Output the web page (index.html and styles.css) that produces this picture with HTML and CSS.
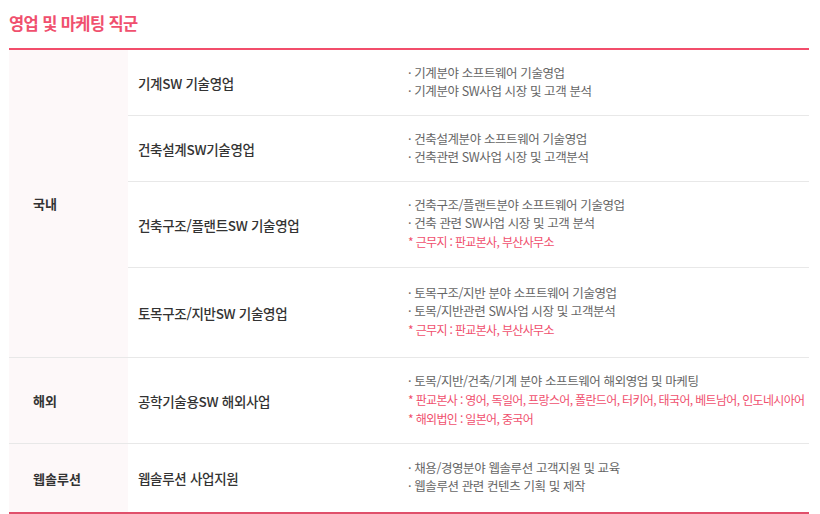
FILE: index.html
```html
<!DOCTYPE html>
<html lang="ko">
<head>
    <meta charset="UTF-8">
    <meta name="viewport" content="width=device-width, initial-scale=1.0">
    <title>영업 및 마케팅 직군</title>
    <link rel="stylesheet" href="styles.css">
</head>
<body>
    <div class="job-section">
        <h2 class="job-title">영업 및 마케팅 직군</h2>
        <table class="job-table">
            <colgroup>
                <col class="col-cat">
                <col class="col-name">
                <col class="col-desc">
            </colgroup>
            <tbody>
                <tr class="group-start">
                    <th rowspan="4" class="cat">국내</th>
                    <td class="name">기계SW 기술영업</td>
                    <td class="desc">
                        <p>· 기계분야 소프트웨어 기술영업</p>
                        <p>· 기계분야 SW사업 시장 및 고객 분석</p>
                    </td>
                </tr>
                <tr>
                    <td class="name">건축설계SW기술영업</td>
                    <td class="desc">
                        <p>· 건축설계분야 소프트웨어 기술영업</p>
                        <p>· 건축관련 SW사업 시장 및 고객분석</p>
                    </td>
                </tr>
                <tr class="row-mid">
                    <td class="name">건축구조/플랜트SW 기술영업</td>
                    <td class="desc">
                        <p>· 건축구조/플랜트분야 소프트웨어 기술영업</p>
                        <p>· 건축 관련 SW사업 시장 및 고객 분석</p>
                        <p class="note">* 근무지 : 판교본사, 부산사무소</p>
                    </td>
                </tr>
                <tr class="row-taller">
                    <td class="name">토목구조/지반SW 기술영업</td>
                    <td class="desc">
                        <p>· 토목구조/지반 분야 소프트웨어 기술영업</p>
                        <p>· 토목/지반관련 SW사업 시장 및 고객분석</p>
                        <p class="note">* 근무지 : 판교본사, 부산사무소</p>
                    </td>
                </tr>
                <tr class="group-start">
                    <th class="cat">해외</th>
                    <td class="name">공학기술용SW 해외사업</td>
                    <td class="desc">
                        <p>· 토목/지반/건축/기계 분야 소프트웨어 해외영업 및 마케팅</p>
                        <p class="note">* 판교본사 : 영어, 독일어, 프랑스어, 폴란드어, 터키어, 태국어, 베트남어, 인도네시아어</p>
                        <p class="note">* 해외법인 : 일본어, 중국어</p>
                    </td>
                </tr>
                <tr class="group-start row-tall last">
                    <th class="cat">웹솔루션</th>
                    <td class="name">웹솔루션 사업지원</td>
                    <td class="desc">
                        <p>· 채용/경영분야 웹솔루션 고객지원 및 교육</p>
                        <p>· 웹솔루션 관련 컨텐츠 기획 및 제작</p>
                    </td>
                </tr>
            </tbody>
        </table>
    </div>
</body>
</html>
```

FILE: styles.css
```css
body {
    margin: 0;
    font-family: "Noto Sans CJK KR", "Noto Sans", sans-serif;
    color: #333;
    background: #fff;
}
.job-section {
    width: 800px;
    padding: 0 9px;
}
.job-title {
    margin: 0;
    padding: 10px 0 12px;
    font-size: 16.5px;
    line-height: 26px;
    font-weight: 700;
    color: #f0506e;
    letter-spacing: -0.6px;
    border-bottom: 2px solid #f24d6b;
}
.job-table {
    width: 100%;
    border-collapse: collapse;
    table-layout: fixed;
}
.col-cat {
    width: 119px;
}
.col-name {
    width: 267px;
}
.job-table td,
.job-table th {
    border-top: 1px solid #e8e8e8;
    vertical-align: middle;
    text-align: left;
}
.job-table tr:first-child td,
.job-table tr:first-child th {
    border-top: none;
}
.cat {
    background: #fdf8f9;
    padding: 0 0 0 24px;
    font-size: 13px;
    font-weight: 700;
    color: #333;
}
.name {
    padding: 0 0 0 10px;
    font-size: 13.5px;
    font-weight: 500;
    color: #333;
    letter-spacing: -0.3px;
}
.desc {
    padding: 14px 0 15px 13px;
    font-size: 12.5px;
    color: #666;
    letter-spacing: -0.4px;
}
.row-mid .desc {
    padding: 14px 0 16px 13px;
}
.row-tall .desc {
    padding: 15px 0 17px 13px;
}
.row-taller .desc {
    padding: 16px 0 18px 13px;
}
.desc p {
    margin: 0;
    line-height: 18px;
    white-space: nowrap;
}
.desc .note {
    font-size: 12px;
    color: #f0506e;
    line-height: 19px;
    letter-spacing: -0.65px;
}
.job-table tr.last td,
.job-table tr.last th {
    border-bottom: 2px solid #e0506b;
}
```
